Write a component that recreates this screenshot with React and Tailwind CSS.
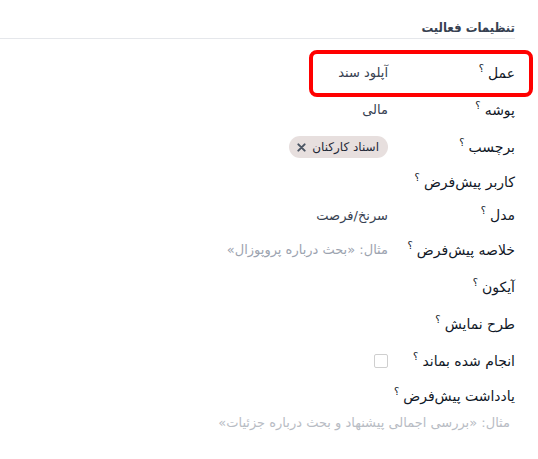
import React from 'react';

const font = { fontFamily: '"DejaVu Sans", "Noto Sans", sans-serif' };

function Label({ children }) {
  return (
    <div className="w-[127px] shrink-0 flex items-start">
      <span className="text-[14px] font-medium text-[#111827]">{children}</span>
      <span className="text-[10px] leading-[10px] text-[#111827] mr-[4px] mt-[1px]">؟</span>
    </div>
  );
}

function Row({ label, children, h = 'h-[37px]' }) {
  return (
    <div className={`flex items-center ${h}`}>
      <Label>{label}</Label>
      <div className="flex-1 text-[13px] text-[#374151]">{children}</div>
    </div>
  );
}

export default function App() {
  return (
    <div dir="rtl" className="min-h-screen bg-white pt-[18px]" style={font}>
      <div className="mr-[23px] border-b border-[#e5e7eb] pb-[0px]">
        <h2
          className="text-[13px] font-bold text-[#374151]"
          style={{ fontFamily: '"DejaVu Sans Condensed", "DejaVu Sans", sans-serif' }}
        >
          تنظیمات فعالیت
        </h2>
      </div>

      <div className="mr-[23px] mt-[16px]">
        <div className="relative">
          <div className="absolute -right-[18px] -top-[5px] w-[224px] h-[47px] border-[4px] border-[#ff0000] rounded-[8px] pointer-events-none" />
          <Row label="عمل">آپلود سند</Row>
        </div>
        <Row label="پوشه">مالی</Row>
        <Row label="برچسب">
          <span className="inline-flex items-center gap-[6px] bg-[#e7dfde] rounded-full pr-[9px] pl-[8px] h-[22px] text-[12px] text-[#1f2937]">
            اسناد کارکنان
            <svg width="9" height="9" viewBox="0 0 10 10" className="text-[#4b5563]">
              <path d="M1.5 1.5 L8.5 8.5 M8.5 1.5 L1.5 8.5" stroke="currentColor" strokeWidth="2.2" strokeLinecap="round" />
            </svg>
          </span>
        </Row>
        <Row label="کاربر پیش‌فرض" h="h-[34px]" />
        <Row label="مدل" h="h-[32px]">سرنخ/فرصت</Row>
        <Row label="خلاصه پیش‌فرض">
          <span className="text-[#9ca3af]">مثال: «بحث درباره پروپوزال»</span>
        </Row>
        <Row label="آیکون" />
        <Row label="طرح نمایش" />
        <Row label="انجام شده بماند">
          <span className="block w-[14px] h-[14px] border border-[#cfcfcf] rounded-[2px]" />
        </Row>
        <Row label="یادداشت پیش‌فرض" h="h-[33px]" />
        <div className="pr-[5px] text-[13px] text-[#b8bcc4]">مثال: «بررسی اجمالی پیشنهاد و بحث درباره جزئیات»</div>
      </div>
    </div>
  );
}
